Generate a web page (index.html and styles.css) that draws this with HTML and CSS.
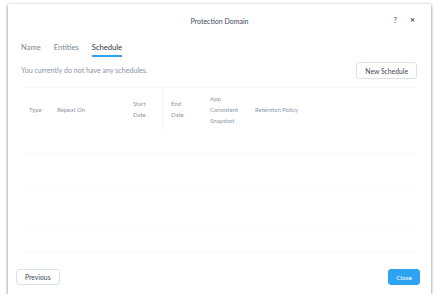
FILE: index.html
```html
<!DOCTYPE html>
<html lang="en">
<head>
    <meta charset="UTF-8">
    <title>Protection Domain</title>
    <link rel="stylesheet" href="styles.css">
</head>
<body>
    <div class="dialog">
        <div class="dialog-header">
            <div class="title">Protection Domain</div>
            <div class="header-icons">
                <span class="help">?</span>
                <span class="close-x">&#x2715;</span>
            </div>
        </div>

        <div class="tabs">
            <span class="tab">Name</span>
            <span class="tab">Entities</span>
            <span class="tab active">Schedule</span>
        </div>

        <div class="content">
            <div class="message-row">
                <span class="empty-msg">You currently do not have any schedules.</span>
                <button class="btn">New Schedule</button>
            </div>

            <div class="table">
                <div class="table-head">
                    <div class="col col-type">Type</div>
                    <div class="col col-repeat">Repeat On</div>
                    <div class="col col-start">Start<br>Date</div>
                    <div class="col col-end">End<br>Date</div>
                    <div class="col col-app">App<br>Consistent<br>Snapshot</div>
                    <div class="col col-ret">Retention Policy</div>
                </div>
                <div class="table-row row-a"></div>
                <div class="table-row row-b"></div>
                <div class="table-row row-c"></div>
                <div class="table-row row-d"></div>
            </div>
        </div>

        <div class="dialog-footer">
            <button class="btn">Previous</button>
            <button class="btn btn-primary">Close</button>
        </div>
    </div>
</body>
</html>
```

FILE: styles.css
```css
body {
    margin: 0;
    background-color: #ffffff;
    font-family: Lato, 'Open Sans', sans-serif;
    color: #3d4a57;
}
.dialog {
    margin: 4px 0 0 8px;
    width: 423px;
    height: 290px;
    background-color: white;
    box-shadow: 0 1px 3px rgba(0,0,0,0.55);
    display: flex;
    flex-direction: column;
    box-sizing: border-box;
}
.dialog-header {
    position: relative;
    height: 34px;
    display: flex;
    align-items: center;
    justify-content: center;
}
.title {
    font-size: 7px;
    color: #3d4a57;
}
.header-icons {
    position: absolute;
    right: 16px;
    top: 12px;
    display: flex;
    gap: 13px;
    font-size: 7px;
    color: #3d4a57;
}
.close-x {
    font-size: 6px;
    font-weight: bold;
}
.tabs {
    display: flex;
    gap: 13px;
    padding: 0 13px;
    height: 20px;
    box-sizing: border-box;
}
.tab {
    font-size: 7.6px;
    color: #7a8694;
    height: 19px;
    box-sizing: border-box;
    padding-top: 4px;
}
.tab.active {
    color: #2b3640;
    border-bottom: 2px solid #2ea3f2;
}
.content {
    flex: 1;
    padding: 4px 14px 0 13px;
}
.message-row {
    display: flex;
    justify-content: space-between;
    align-items: center;
    height: 17px;
}
.empty-msg {
    font-size: 7.1px;
    color: #8a96a3;
}
.btn {
    font-family: Lato, 'Open Sans', sans-serif;
    font-size: 6.8px;
    color: #3d4a57;
    background-color: white;
    border: 1px solid #dde2e7;
    border-radius: 3px;
    height: 17px;
    padding: 0 8px;
}
.table {
    margin: 8px 0 0 2px;
    border-top: 1px solid #f2f3f5;
}
.table-head {
    display: flex;
    align-items: center;
    height: 42px;
    font-size: 6px;
    color: #8d98a4;
    line-height: 11px;
}
.col {
    padding-left: 6px;
    box-sizing: border-box;
}
.col-type { width: 28px; }
.col-repeat { width: 76px; }
.col-start {
    width: 36px;
    align-self: stretch;
    display: flex;
    flex-direction: column;
    justify-content: center;
    border-right: 1px solid #f4f5f7;
}
.col-end { width: 41px; padding-left: 8px; }
.col-app { width: 45px; }
.col-ret { flex: 1; }
.table-row {
    border-bottom: 1px solid #f9fafb;
}
.row-a { height: 22px; }
.row-b { height: 33px; }
.row-c { height: 43px; }
.row-d { height: 21px; }
.dialog-footer {
    display: flex;
    justify-content: space-between;
    padding: 0 11px 9px 8px;
}
.dialog-footer .btn {
    height: 16px;
}
.btn-primary {
    background-color: #2ea3f2;
    border-color: #2ea3f2;
    color: white;
    padding: 0 7px;
    font-size: 6.5px;
}
```
